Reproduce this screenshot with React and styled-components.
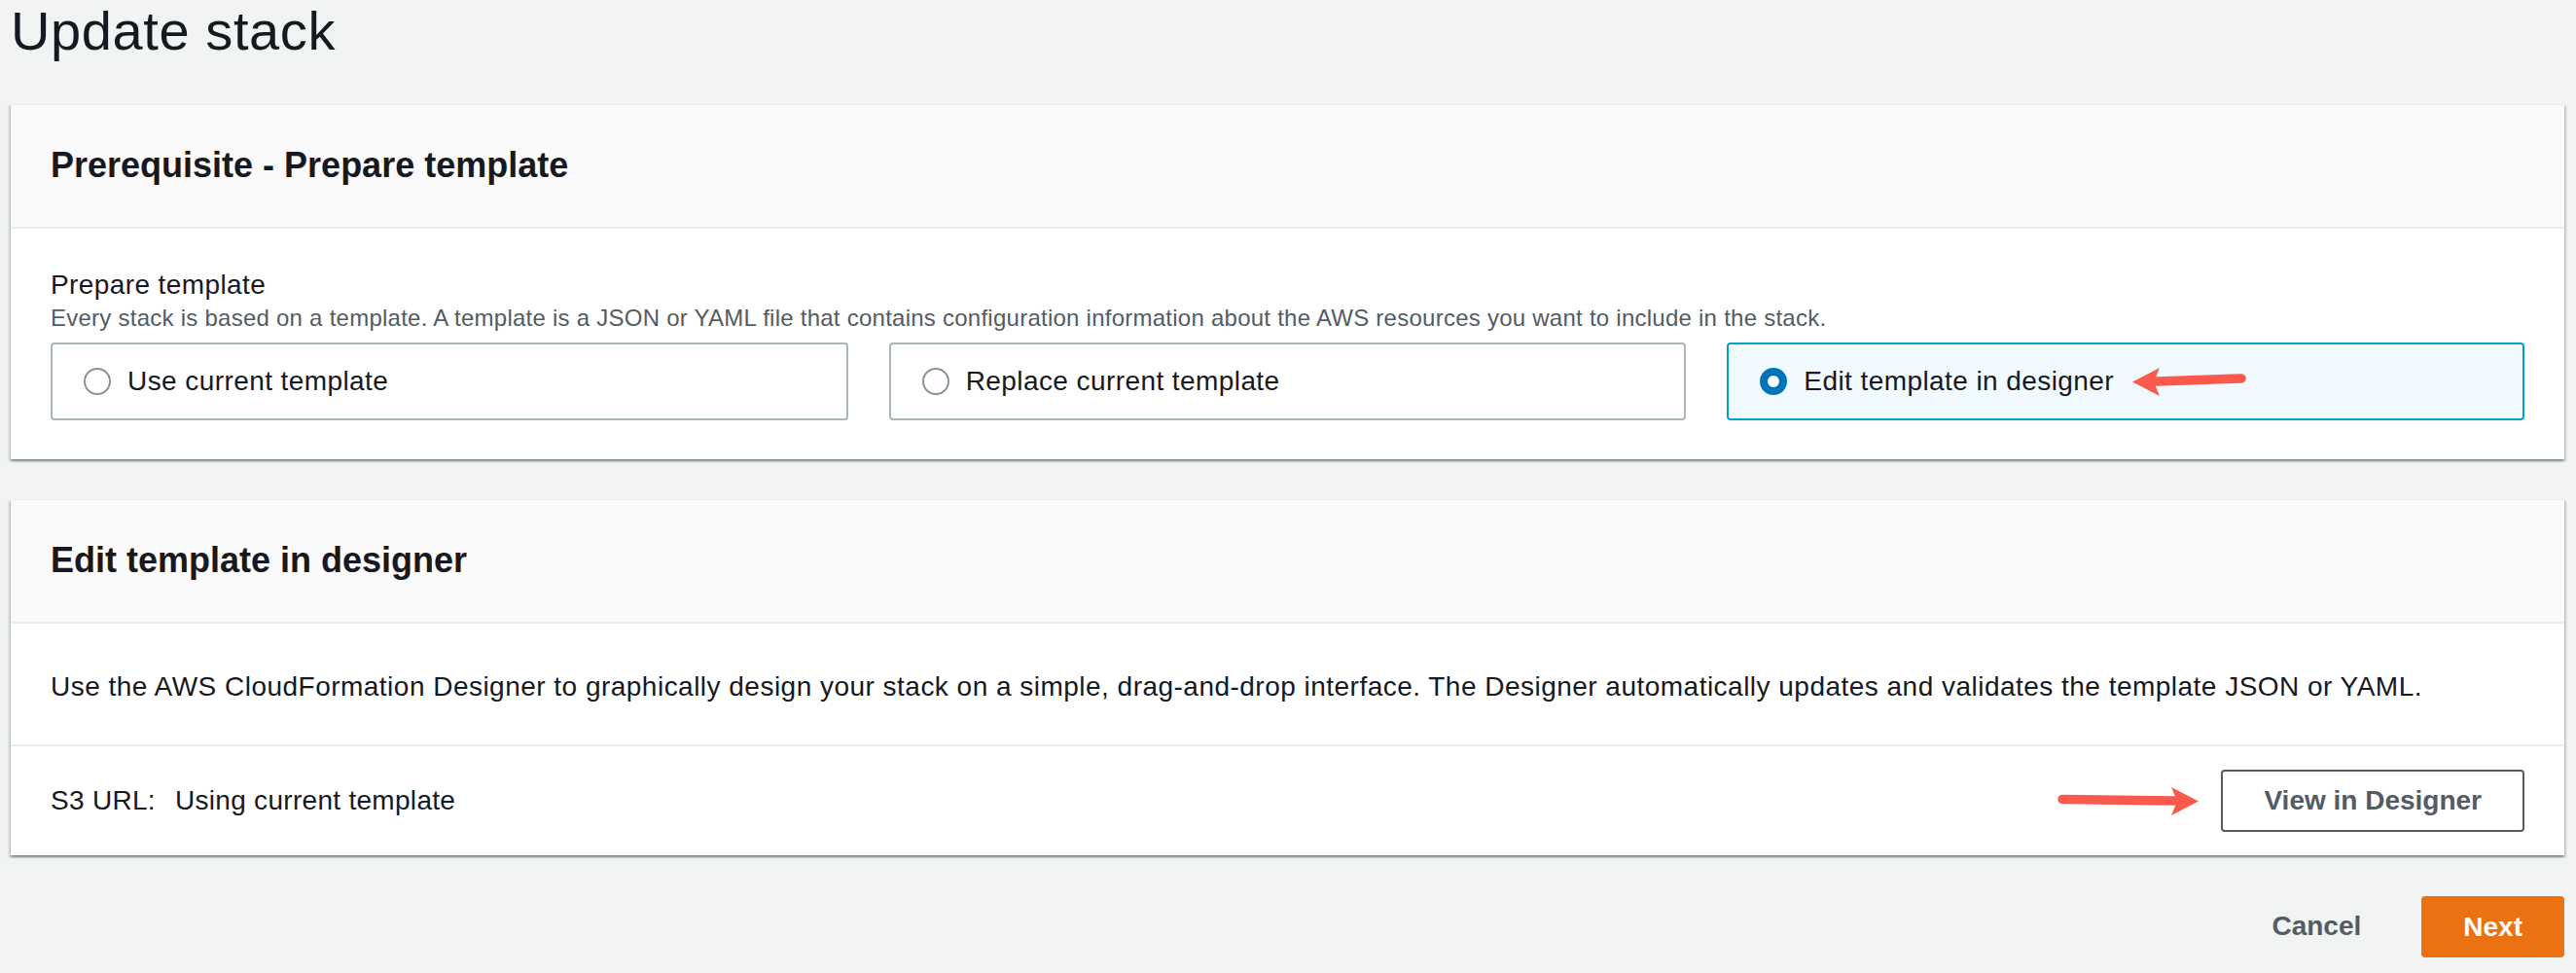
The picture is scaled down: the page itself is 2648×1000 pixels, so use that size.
import React from "react";
import styled, { createGlobalStyle } from "styled-components";

const GlobalStyle = createGlobalStyle`
  html, body {
    margin: 0;
    padding: 0;
    background: #f2f3f3;
  }
  body {
    font-family: "Liberation Sans", Arial, sans-serif;
    color: #16191f;
  }
  * {
    box-sizing: border-box;
  }
`;

const Page = styled.div`
  min-height: 100vh;
  padding: 0 12px 0 11px;
  background: #f2f3f3;
`;

const Title = styled.h1`
  margin: 0 0 43px;
  font-size: 56px;
  line-height: 64px;
  font-weight: 400;
  letter-spacing: 0.6px;
  color: #16191f;
`;

const Panel = styled.section`
  background: #fff;
  border-top: 1px solid #eaeded;
  box-shadow: 0 2px 2px 0 rgba(0, 28, 36, 0.3),
    2px 2px 2px 0 rgba(0, 28, 36, 0.15), -2px 2px 2px 0 rgba(0, 28, 36, 0.15);
  margin-bottom: 41px;
`;

const PanelHeader = styled.div`
  background: #fafafa;
  border-bottom: 2px solid #eaeded;
  padding: 40px 41px 41px;
  h2 {
    margin: 0;
    font-size: 36px;
    line-height: 44px;
    font-weight: 700;
  }
`;

const PanelBody = styled.div`
  padding: ${(p) => p.$pad || "40px 41px"};
  border-top: ${(p) => (p.$divider ? "2px solid #eaeded" : "none")};
`;

const FieldLabel = styled.div`
  font-size: 28px;
  line-height: 36px;
  letter-spacing: 0.4px;
`;

const FieldHint = styled.div`
  font-size: 24px;
  line-height: 31px;
  letter-spacing: 0.25px;
  color: #545b64;
`;

const Tiles = styled.div`
  display: grid;
  grid-template-columns: repeat(3, 1fr);
  gap: 42px;
  margin-top: 10px;
`;

const Tile = styled.label`
  display: flex;
  align-items: center;
  height: 80px;
  padding: 0 32px;
  border: 2px solid ${(p) => (p.$checked ? "#00a1c9" : "#aab7b8")};
  border-radius: 4px;
  background: ${(p) => (p.$checked ? "#f1faff" : "#fff")};
  font-size: 28px;
  line-height: 36px;
  letter-spacing: 0.42px;
  cursor: pointer;
`;

const Radio = styled.span`
  flex: none;
  width: 28px;
  height: 28px;
  border-radius: 50%;
  margin-right: 17px;
  background: #fff;
  border: ${(p) => (p.$checked ? "8px solid #0073bb" : "2px solid #879596")};
`;

const Paragraph = styled.p`
  margin: 0;
  font-size: 28px;
  line-height: 46px;
  letter-spacing: 0.48px;
`;

const FooterRow = styled.div`
  display: flex;
  align-items: center;
  justify-content: space-between;
`;

const S3Line = styled.div`
  display: flex;
  gap: 20px;
  font-size: 28px;
  line-height: 36px;
  letter-spacing: 0.3px;
`;

const RightGroup = styled.div`
  display: flex;
  align-items: center;
  gap: 22px;
`;

const Button = styled.button`
  font-family: "Liberation Sans", Arial, sans-serif;
  font-size: 28px;
  line-height: 36px;
  font-weight: 700;
  border-radius: 4px;
  cursor: pointer;
  color: ${(p) => (p.$primary ? "#fff" : "#545b64")};
  background: ${(p) => (p.$primary ? "#ec7211" : "transparent")};
  border: 2px solid
    ${(p) => (p.$primary ? "#ec7211" : p.$link ? "transparent" : "#545b64")};
  padding: ${(p) => (p.$primary ? "12px 41px" : p.$link ? "12px 40px" : "12px 42px")};
  height: ${(p) => (p.$primary ? "63px" : "64px")};
`;

const Actions = styled.div`
  display: flex;
  justify-content: flex-end;
  align-items: center;
  gap: 20px;
`;

const ArrowSvg = styled.svg`
  flex: none;
  display: block;
  margin-left: ${(p) => p.$ml || "0"};
`;

function Arrow({ dir, width, ml }) {
  const left = dir === "left";
  return (
    <ArrowSvg
      width={width}
      height="32"
      viewBox={`0 0 ${width} 32`}
      $ml={ml}
      style={left ? { transform: "scaleX(-1)" } : undefined}
    >
      <line
        x1="5"
        y1={left ? 13 : 14.5}
        x2={width - 26}
        y2="16"
        stroke="#fa5a4c"
        strokeWidth="9.5"
        strokeLinecap="round"
      />
      <path
        d={`M${width - 1} 16.5 L${width - 29} 2 L${width - 23} 16.5 L${width - 29} 31 Z`}
        fill="#fa5a4c"
      />
    </ArrowSvg>
  );
}

const options = [
  { id: "current", label: "Use current template" },
  { id: "replace", label: "Replace current template" },
  { id: "designer", label: "Edit template in designer" },
];

export default function App() {
  const selected = "designer";
  return (
    <Page>
      <GlobalStyle />
      <Title>Update stack</Title>

      <Panel>
        <PanelHeader>
          <h2>Prerequisite - Prepare template</h2>
        </PanelHeader>
        <PanelBody>
          <FieldLabel>Prepare template</FieldLabel>
          <FieldHint>
            Every stack is based on a template. A template is a JSON or YAML
            file that contains configuration information about the AWS
            resources you want to include in the stack.
          </FieldHint>
          <Tiles>
            {options.map((o) => (
              <Tile key={o.id} $checked={o.id === selected}>
                <Radio $checked={o.id === selected} />
                {o.label}
                {o.id === selected && <Arrow dir="left" width={118} ml="18px" />}
              </Tile>
            ))}
          </Tiles>
        </PanelBody>
      </Panel>

      <Panel>
        <PanelHeader>
          <h2>Edit template in designer</h2>
        </PanelHeader>
        <PanelBody $pad="42px 41px 36px">
          <Paragraph>
            Use the AWS CloudFormation Designer to graphically design your
            stack on a simple, drag-and-drop interface. The Designer
            automatically updates and validates the template JSON or YAML.
          </Paragraph>
        </PanelBody>
        <PanelBody $pad="24px 41px" $divider>
          <FooterRow>
            <S3Line>
              <span>S3 URL:</span>
              <span>Using current template</span>
            </S3Line>
            <RightGroup>
              <Arrow dir="right" width={146} />
              <Button>View in Designer</Button>
            </RightGroup>
          </FooterRow>
        </PanelBody>
      </Panel>

      <Actions>
        <Button $link>Cancel</Button>
        <Button $primary>Next</Button>
      </Actions>
    </Page>
  );
}
